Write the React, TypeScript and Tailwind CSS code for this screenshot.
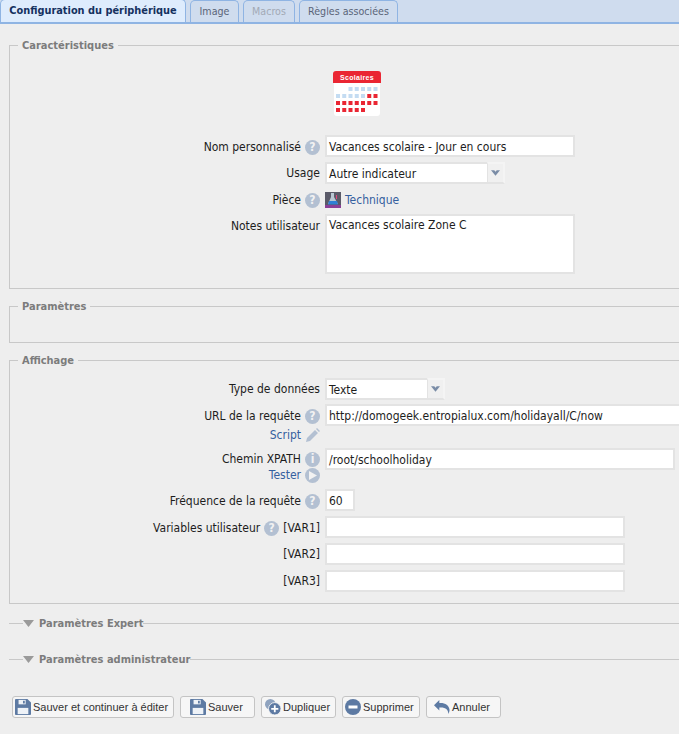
import React from "react";

const font = "font-['DejaVu_Sans_Condensed','DejaVu_Sans',sans-serif]";

function Help({ glyph = "?", className = "" }: { glyph?: string; className?: string }) {
  return (
    <span className={`inline-flex h-[15px] w-[15px] shrink-0 items-center justify-center rounded-full bg-[#b3c0d2] text-[12px] font-bold leading-none text-[#f2f2f2] ${className}`}>
      {glyph}
    </span>
  );
}

function Calendar() {
  const rows = [
    "..bbbbb".split(""),
    "bbbbbrr".split(""),
    "rrrrrrr".split(""),
    "rrrrr..".split(""),
  ];
  return (
    <svg width="48" height="48" viewBox="0 0 48 48">
      <rect x="1" y="2" width="46" height="44" rx="3" fill="#ffffff" />
      <path d="M0 13V4a3 3 0 0 1 3-3h42a3 3 0 0 1 3 3v9z" fill="#ea2633" />
      <text x="24" y="9.500" textAnchor="middle" fontSize="7" fontWeight="bold" fill="#fff" letterSpacing="0.3" fontFamily="'Liberation Sans',sans-serif">Scolaires</text>
      {rows.map((r, y) =>
        r.map((c, x) =>
          c === "." ? null : (
            <rect key={`${x}-${y}`} x={3 + x * 6.25} y={17 + y * 7} width="4" height="4" fill={c === "b" ? "#c4dcf2" : "#ea2633"} />
          )
        )
      )}
    </svg>
  );
}

function Row({ label, children, className = "", pt = "pt-[3px]" }: { label: React.ReactNode; children: React.ReactNode; className?: string; pt?: string }) {
  return (
    <div className={`flex items-start ${className}`}>
      <div className={`flex w-[310px] shrink-0 items-center justify-end gap-[4px] ${pt} text-[#1d1d1d]`}>{label}</div>
      <div className="ml-[5px] min-w-0">{children}</div>
    </div>
  );
}

const inputCls = "block h-[22px] border-2 border-[#e3e3e3] bg-white px-[2px] text-[12px] leading-[20px] text-[#1d1d1d]";

function Field({ value, w }: { value: string; w: string }) {
  return <div className={`${inputCls} ${w} whitespace-nowrap overflow-hidden`}>{value}</div>;
}

function Select({ value, w }: { value: string; w: string }) {
  return (
    <div className={`${inputCls} ${w} relative`}>
      {value}
      <span className="absolute right-[-2px] top-[-2px] flex h-[22px] w-[18px] items-center justify-center border-2 border-l border-[#e3e3e3] border-r-[#f4f4f4] border-t-[#f4f4f4] bg-[#f0f0f0]">
        <svg width="9" height="6" viewBox="0 0 11 7"><path d="M0 0h4l1.500 2L7 0h4L5.500 7z" fill="#7a8ca6" /></svg>
      </span>
    </div>
  );
}

function Legend({ children }: { children: React.ReactNode }) {
  return <legend className="ml-[8px] translate-y-[1px] px-[4px] text-[11px] font-bold leading-[14px] text-[#7c7c7c]">{children}</legend>;
}

function Disk() {
  return (
    <svg className="shrink-0" width="16" height="16" viewBox="0 0 18 18">
      <path d="M0 1a1 1 0 0 1 1-1h13l4 4v13a1 1 0 0 1-1 1H1a1 1 0 0 1-1-1z" fill="#5d7aa3" />
      <rect x="4" y="1" width="8" height="5" fill="#eef2f7" />
      <rect x="9" y="2" width="2" height="3" fill="#5d7aa3" />
      <rect x="3" y="10" width="12" height="7" fill="#eef2f7" />
    </svg>
  );
}

function Btn({ icon, label, w, pl }: { icon: React.ReactNode; label: string; w: string; pl: string }) {
  return (
    <div className={`flex h-[22px] ${w} ${pl} items-center rounded-[3px] border border-[#c4c4c4] bg-[#f6f6f6] font-['Liberation_Sans',sans-serif] text-[11px] text-[#333333]`}>
      {icon}
      <span className="ml-[2px] whitespace-nowrap">{label}</span>
    </div>
  );
}

function Tab({ children, active, disabled, w }: { children: React.ReactNode; active?: boolean; disabled?: boolean; w: string }) {
  return (
    <div
      className={`flex ${w} items-center justify-center whitespace-nowrap rounded-t-[5px] border border-b-0 border-[#8fb4e3] ${
        active
          ? "h-[23px] bg-[#deecfd] text-[10.9px] font-bold text-[#15315f]"
          : disabled
          ? "h-[22px] bg-[#cfdcee] text-[10.6px] text-[#a2a9b5]"
          : "h-[22px] bg-[#cfdcee] text-[10.6px] text-[#5a6478]"
      }`}
    >
      {children}
    </div>
  );
}

function Collapsed({ children, className }: { children: React.ReactNode; className: string }) {
  return (
    <div className={`${className} flex h-[18px] items-center text-[11px] text-[#7c7c7c]`}>
      <span className="h-px w-[14px] bg-[#c8c8c8]" />
      <svg width="11" height="7" viewBox="0 0 11 7"><path d="M0 0h11L5.500 7z" fill="#9a9a9a" /></svg>
      <span className="ml-[5px] translate-y-[1px] font-bold">{children}</span>
      <span className="h-px flex-1 bg-[#c8c8c8]" />
    </div>
  );
}

export default function App() {
  return (
    <div className={`${font} h-[734px] w-[679px] overflow-hidden bg-[#eeeeee] text-[12px]`}>
      <div className="flex h-[24px] items-end gap-[4px] border-b-2 border-[#8fb4e3] bg-[#cfdcee]">
        <Tab active w="w-[186px]">Configuration du périphérique</Tab>
        <Tab w="w-[49px]">Image</Tab>
        <Tab disabled w="w-[52px]">Macros</Tab>
        <Tab w="w-[99px]">Règles associées</Tab>
      </div>

      <div className="w-[679px] pl-[9px] pt-[14px]">
        <fieldset className="h-[251px] border border-r-0 border-[#c8c8c8]">
          <Legend>Caractéristiques</Legend>
          <div className="ml-[323px] mt-[18px] h-[48px]"><Calendar /></div>
          <div className="mt-[17px] flex flex-col">
            <Row label={<><span>Nom personnalisé</span><Help /></>}><Field value="Vacances scolaire - Jour en cours" w="w-[250px]" /></Row>
            <Row className="mt-[5px]" pt="pt-[2px]" label="Usage"><Select value="Autre indicateur" w="w-[180px]" /></Row>
            <Row className="mt-[5px] h-[25px]" pt="pt-[2px]" label={<><span>Pièce</span><Help /></>}>
              <div className="flex items-center pt-[2px]">
                <svg width="16" height="16" viewBox="0 0 16 16">
                  <rect width="16" height="16" fill="#5a5a68" />
                  <rect y="13" width="16" height="3" fill="#8a3f97" />
                  <path d="M6 1h3v4l4 7H3l3-7z" fill="#b9c6d2" />
                  <path d="M4 9h8l1 3.500H3z" fill="#2f7fd6" />
                  <rect x="11" y="3" width="1" height="4" fill="#e0467c" />
                </svg>
                <span className="ml-[4px] text-[#35609f]">Technique</span>
              </div>
            </Row>
            <Row label="Notes utilisateur">
              <div className={`${inputCls} h-[60px] w-[250px]`}><span className="-mt-px block">Vacances scolaire Zone C</span></div>
            </Row>
          </div>
        </fieldset>

        <fieldset className="mt-[10px] h-[44px] border border-r-0 border-[#c8c8c8]">
          <Legend>Paramètres</Legend>
        </fieldset>

        <fieldset className="mt-[10px] h-[251px] border border-r-0 border-[#c8c8c8]">
          <Legend>Affichage</Legend>
          <div className="mt-[11px] flex flex-col">
            <Row pt="pt-[2px]" label="Type de données"><Select value="Texte" w="w-[120px]" /></Row>
            <Row className="mt-[4px]" label={<><span>URL de la requête</span><Help /></>}><Field value="http://domogeek.entropialux.com/holidayall/C/now" w="w-[360px]" /></Row>
            <div className="flex h-[22px] w-[310px] items-center justify-end gap-[4px] pb-[4px] text-[#35609f]">
              <span>Script</span>
              <svg width="15" height="15" viewBox="0 0 15 15"><path d="M1 14l1-4 8-8 3 3-8 8zM11 1l1-1 3 3-1 1z" fill="#b3c0d2" /></svg>
            </div>
            <Row pt="pt-[2px]" label={<><span>Chemin XPATH</span><Help glyph="i" /></>}><Field value="/root/schoolholiday" w="w-[350px]" /></Row>
            <div className="flex h-[19px] w-[310px] items-center justify-end gap-[4px] pb-[9px] text-[#35609f]">
              <span>Tester</span>
              <span className="flex h-[15px] w-[15px] shrink-0 items-center justify-center rounded-full bg-[#b3c0d2]">
                <svg width="8" height="9" viewBox="0 0 8 9"><path d="M0 0l8 4.500L0 9z" fill="#f2f2f2" /></svg>
              </span>
            </div>
            <Row label={<><span>Fréquence de la requête</span><Help /></>}><Field value="60" w="w-[30px]" /></Row>
            <Row className="mt-[5px]" label={<><span>Variables utilisateur</span><Help /><span>[VAR1]</span></>}><Field value="" w="w-[300px]" /></Row>
            <Row className="mt-[5px]" pt="pt-[2px]" label="[VAR2]"><Field value="" w="w-[300px]" /></Row>
            <Row className="mt-[5px]" pt="pt-[2px]" label="[VAR3]"><Field value="" w="w-[300px]" /></Row>
          </div>
        </fieldset>

        <Collapsed className="mt-[10px]">Paramètres Expert</Collapsed>
        <Collapsed className="mt-[18px]">Paramètres administrateur</Collapsed>

        <div className="ml-[3px] mt-[28px] flex gap-[6px]">
          <Btn w="w-[162px]" pl="pl-[2px]" label="Sauver et continuer à éditer" icon={<Disk />} />
          <Btn w="w-[75px]" pl="pl-[9px]" label="Sauver" icon={<Disk />} />
          <Btn w="w-[75px]" pl="pl-[3px]" label="Dupliquer" icon={
            <svg className="shrink-0" width="16" height="16" viewBox="0 0 18 18">
              <circle cx="6" cy="6" r="6" fill="#8fa3bf" />
              <circle cx="11" cy="11" r="7" fill="#5d7aa3" stroke="#f6f6f6" strokeWidth="1" />
              <path d="M7 10h3V7h2v3h3v2h-3v3h-2v-3H7z" fill="#fff" />
            </svg>} />
          <Btn w="w-[78px]" pl="pl-[2px]" label="Supprimer" icon={
            <svg className="shrink-0" width="16" height="16" viewBox="0 0 16 16"><circle cx="8" cy="8" r="8" fill="#5d7aa3" /><rect x="3.500" y="6.500" width="9" height="3" fill="#fff" /></svg>} />
          <Btn w="w-[75px]" pl="pl-[7px]" label="Annuler" icon={
            <svg className="shrink-0" width="16" height="16" viewBox="0 0 18 16"><path d="M6 0v3.500c6-.5 11 2 11.500 8 0 1.500-.5 3-1.500 4.500 .5-5-3-8-10-7.500V12L0 6z" fill="#5d7aa3" /></svg>} />
        </div>
      </div>
    </div>
  );
}
